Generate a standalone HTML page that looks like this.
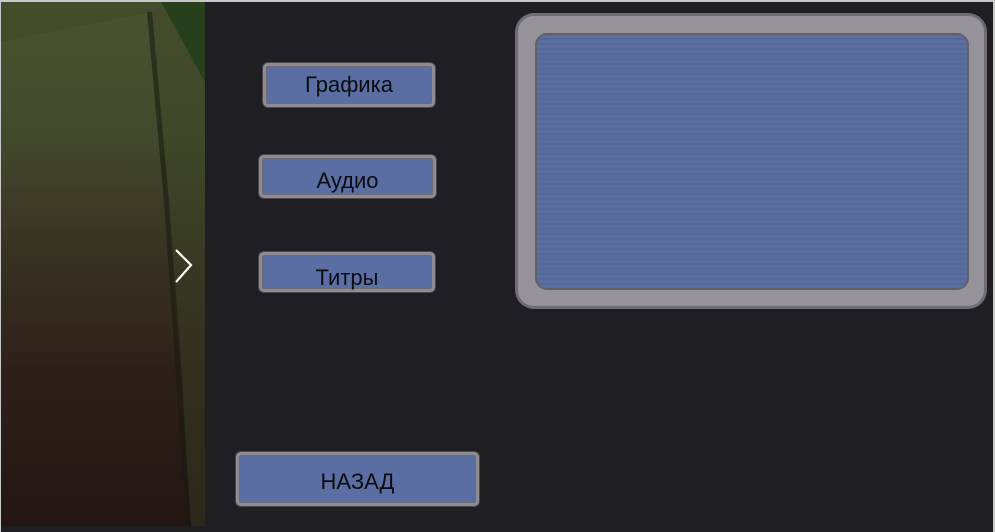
<!DOCTYPE html>
<html><head><meta charset="utf-8"><style>
html,body{margin:0;padding:0}
body{width:995px;height:532px;background:#1f1e23;position:relative;overflow:hidden;font-family:"Liberation Sans","DejaVu Sans",sans-serif}
.frame{position:absolute;inset:0;border-top:2px solid #c9c9c9;border-left:1px solid #c9c9c9;border-right:2px solid #c9c9c9;box-sizing:border-box;pointer-events:none}
.img{position:absolute;left:1px;top:2px;width:204px;height:524px;background:linear-gradient(180deg,#4a5230 0%,#434a2c 25%,#3a3524 45%,#2e2019 70%,#231512 100%)}
.btn{position:absolute;box-sizing:border-box;background:#5a6ea3;border:3px solid #8f8b93;border-radius:5px;box-shadow:inset 0 0 0 1px #6e6a72,0 0 0 1px #4a474e;color:#0c0c10;font-size:22px;text-align:center}
.panel{position:absolute;left:518px;top:16px;width:466px;height:290px;background:#969299;border-radius:16px;box-shadow:0 0 0 3px #6f6c73}
.inner{position:absolute;left:17px;top:17px;right:15px;bottom:16px;border-radius:12px;border:2px solid #636068;background:repeating-linear-gradient(180deg,#5b6e9f 0,#5b6e9f 3px,#55689a 3px,#55689a 5px)}
</style></head><body>
<div class="img">
<svg width="204" height="524" style="position:absolute;left:0;top:0">
<polygon points="0,0 204,0 204,524 190,524 180,380 170,250 150,10 0,40" fill="#3a4526" opacity="0.4"/>
<polygon points="160,0 204,0 204,80" fill="#1c3a17" opacity="0.7"/>
<polygon points="146,10 151,10 168,200 180,360 190,524 185,524 174,360 163,200" fill="#1a1a12" opacity="0.6"/>
</svg>
</div>
<svg style="position:absolute;left:170px;top:244px" width="30" height="44"><polyline points="6,6 21,21 6,38" fill="none" stroke="#fff" stroke-width="2.2"/></svg>
<div class="btn" style="left:263px;top:63px;width:172px;height:44px;line-height:38px">Графика</div>
<div class="btn" style="left:259px;top:155px;width:177px;height:43px;line-height:45px">Аудио</div>
<div class="btn" style="left:259px;top:252px;width:176px;height:40px;line-height:46px">Титры</div>
<div class="btn" style="left:236px;top:452px;width:243px;height:54px;line-height:54px">НАЗАД</div>
<div class="panel"><div class="inner"></div></div>
<div class="frame"></div>
</body></html>
